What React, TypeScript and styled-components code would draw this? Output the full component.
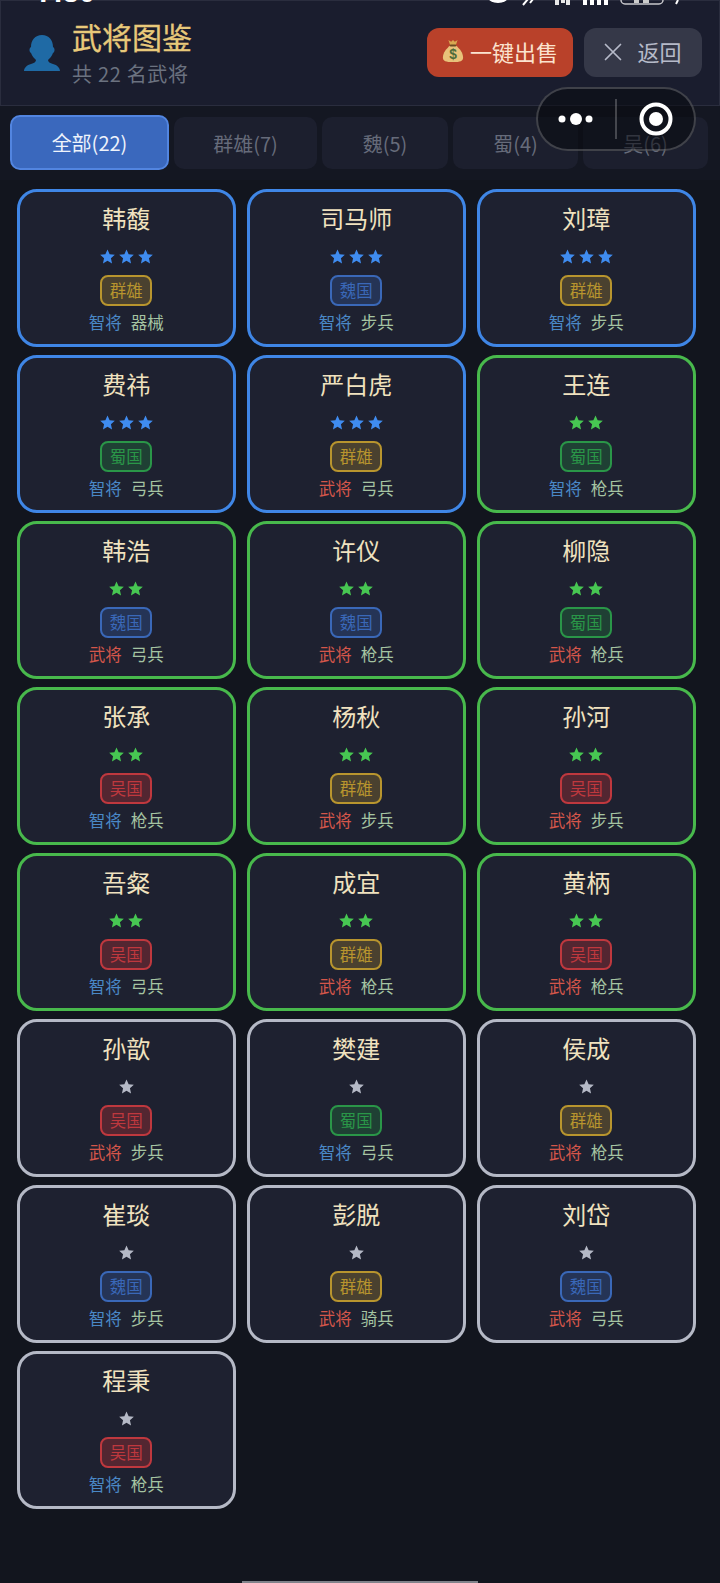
import React from "react";
import styled, { createGlobalStyle } from "styled-components";

const Global = createGlobalStyle`
  html, body { margin: 0; padding: 0; background: #12151e; }
  * { box-sizing: border-box; }
  body { font-family: "Noto Sans CJK SC", "Noto Sans", sans-serif; }
`;

const Page = styled.div`
  position: relative;
  width: 720px;
  height: 1583px;
  overflow: hidden;
  background: #12151e;
`;

const StatusClip = styled.div`
  position: absolute;
  top: 0;
  left: 0;
  right: 0;
  height: 6px;
  overflow: hidden;
  z-index: 3;
`;

const Time = styled.div`
  position: absolute;
  left: 37px;
  top: -23px;
  font: 700 29px/30px "Liberation Sans", sans-serif;
  color: #fff;
`;

const StatusIcons = styled.svg`
  position: absolute;
  left: 480px;
  top: 0;
`;

const Header = styled.header`
  height: 106px;
  display: flex;
  align-items: center;
  justify-content: space-between;
  padding: 0 17px 0 22px;
  background: #1a1d2e;
  border: 1px solid #2a2d3e;
`;

const TitleGroup = styled.div`
  display: flex;
  align-items: center;
  gap: 11px;
`;

const TitleText = styled.div`
  display: flex;
  flex-direction: column;
  gap: 5px;
  margin-top: 1px;
`;

const Title = styled.h1`
  margin: 0;
  font-size: 30px;
  line-height: 36px;
  font-weight: 400;
  color: #e8c97a;
  -webkit-text-stroke: 0.3px #e8c97a;
`;

const Subtitle = styled.div`
  font-size: 20px;
  line-height: 30px;
  letter-spacing: 0.7px;
  color: #6b7280;
`;

const Actions = styled.div`
  display: flex;
  gap: 11px;
  margin-bottom: 2px;
`;

const HeaderButton = styled.button<{ $sell?: boolean }>`
  height: 49px;
  width: ${(p) => (p.$sell ? 146 : 118)}px;
  padding: 0 0 2px;
  border: 0;
  border-radius: 12px;
  display: flex;
  align-items: center;
  justify-content: center;
  gap: ${(p) => (p.$sell ? 6 : 15)}px;
  font-family: inherit;
  font-size: 22px;
  background: ${(p) => (p.$sell ? "#b9412a" : "#353848")};
  color: ${(p) => (p.$sell ? "#fbe3cf" : "#b6bac9")};
`;

const TabBar = styled.nav`
  height: 74px;
  display: flex;
  align-items: flex-start;
  gap: 5px;
  padding: 9px 11px 0 10px;
  background: #141722;
`;

const Tab = styled.div<{ $active?: boolean; $w: number }>`
  width: ${(p) => p.$w}px;
  height: ${(p) => (p.$active ? 55 : 52)}px;
  margin-top: ${(p) => (p.$active ? 0 : 2)}px;
  border-radius: 10px;
  display: flex;
  align-items: center;
  justify-content: center;
  font-size: 20px;
  background: ${(p) => (p.$active ? "#3a68bd" : "#1c1f2e")};
  color: ${(p) => (p.$active ? "#eef3fb" : "#666b7a")};
  border: ${(p) => (p.$active ? "2px solid #5285e0" : "0")};
`;

const Grid = styled.main`
  display: grid;
  grid-template-columns: repeat(3, 218.5px);
  grid-auto-rows: 158px;
  column-gap: 11.5px;
  row-gap: 8px;
  padding: 9px 24px 0 17px;
`;

const rarity = {
  3: { border: "#3f86e6", star: "#3f8cf0" },
  2: { border: "#48b94c", star: "#47c752" },
  1: { border: "#b5b9c6", star: "#b5b9c6" },
} as const;

const Card = styled.article<{ $level: 1 | 2 | 3 }>`
  border: 3px solid ${(p) => rarity[p.$level].border};
  border-radius: 20px;
  background: #1e2130;
  display: flex;
  flex-direction: column;
  align-items: center;
  padding-top: 8px;
`;

const Name = styled.div`
  font-size: 24px;
  line-height: 36px;
  color: #f0e2bf;
`;

const Stars = styled.div<{ $level: 1 | 2 | 3 }>`
  display: flex;
  gap: 4px;
  height: 20px;
  margin-top: 12px;
  padding-top: 1px;
  color: ${(p) => rarity[p.$level].star};
`;

const factionColors: Record<string, { c: string; bg: string }> = {
  群雄: { c: "#b8952e", bg: "#4a412f" },
  魏国: { c: "#3a68b8", bg: "#253456" },
  蜀国: { c: "#2a9648", bg: "#1f4034" },
  吴国: { c: "#bf383e", bg: "#532631" },
};

const Faction = styled.div<{ $f: string }>`
  width: 52px;
  height: 31px;
  margin-top: 6.5px;
  border-radius: 8px;
  border: 2px solid ${(p) => factionColors[p.$f].c};
  background: ${(p) => factionColors[p.$f].bg};
  color: ${(p) => factionColors[p.$f].c};
  font-size: 16.5px;
  line-height: 26px;
  text-align: center;
  white-space: nowrap;
`;

const Meta = styled.div`
  display: flex;
  gap: 9px;
  margin-top: 2.5px;
  font-size: 16.5px;
  line-height: 28px;
`;

const Role = styled.span<{ $wu: boolean }>`
  color: ${(p) => (p.$wu ? "#d4564a" : "#4a88c6")};
`;

const Arm = styled.span`
  color: #a5c4a2;
`;

const Capsule = styled.div`
  position: absolute;
  left: 536px;
  top: 87px;
  width: 160px;
  height: 64px;
  border-radius: 32px;
  border: 2px solid rgba(255, 255, 255, 0.2);
  background: rgba(8, 9, 14, 0.55);
  z-index: 2;
`;

const CapsuleIcons = styled.svg`
  position: absolute;
  left: -2px;
  top: -2px;
`;

const HomeBar = styled.div`
  position: absolute;
  left: 242px;
  bottom: 0;
  width: 236px;
  height: 2px;
  background: #80828a;
`;

const CrossIcon = styled.svg`
  margin-top: 2px;
`;

const Bust = () => (
  <svg width="38" height="36" viewBox="0 0 36 36">
    <path
      d="M18 0C25 0 29 5 29 12C31 13 31 17 29 18C28 21 26 23 24 25C24 27 26 28 29 29C33 30 36 33 36 36H0C0 33 3 30 7 29C10 28 12 27 12 25C10 23 8 21 7 18C5 17 5 13 7 12C7 5 11 0 18 0Z"
      fill="#1f6aa5"
    />
  </svg>
);

const Bag = () => (
  <svg width="22" height="24" viewBox="0 0 24 26">
    <path d="M7 1l3 2 2-2 2 2 3-2-2 6H9z" fill="#d8a850" />
    <path d="M9 7h6c4 3 8 8 8 13 0 4-3 5-11 5S1 24 1 20C1 15 5 10 9 7z" fill="#e8c27a" />
    <rect x="8.500" y="6" width="7" height="2" rx="1" fill="#6a4a22" />
    <text x="12" y="22" textAnchor="middle" fontSize="15" fontWeight="700" fill="#4d6b3a" fontFamily="Liberation Sans">$</text>
  </svg>
);

const Cross = () => (
  <CrossIcon width="18" height="18" viewBox="0 0 18 18">
    <path d="M1.500 1.500l15 15M16.500 1.500l-15 15" stroke="#b6bac9" strokeWidth="1.700" strokeLinecap="round" />
  </CrossIcon>
);

const Star = () => (
  <svg width="15" height="15" viewBox="0 0 24 24" fill="currentColor">
    <path d="M12 .8l3.400 7.600 8.300.9-6.200 5.600 1.800 8.200L12 18.900 4.700 23.100l1.800-8.200L.3 9.300l8.300-.9z" />
  </svg>
);

type Row = [string, 1 | 2 | 3, string, string, string];
const heroes: Row[] = [
  ["韩馥", 3, "群雄", "智将", "器械"],
  ["司马师", 3, "魏国", "智将", "步兵"],
  ["刘璋", 3, "群雄", "智将", "步兵"],
  ["费祎", 3, "蜀国", "智将", "弓兵"],
  ["严白虎", 3, "群雄", "武将", "弓兵"],
  ["王连", 2, "蜀国", "智将", "枪兵"],
  ["韩浩", 2, "魏国", "武将", "弓兵"],
  ["许仪", 2, "魏国", "武将", "枪兵"],
  ["柳隐", 2, "蜀国", "武将", "枪兵"],
  ["张承", 2, "吴国", "智将", "枪兵"],
  ["杨秋", 2, "群雄", "武将", "步兵"],
  ["孙河", 2, "吴国", "武将", "步兵"],
  ["吾粲", 2, "吴国", "智将", "弓兵"],
  ["成宜", 2, "群雄", "武将", "枪兵"],
  ["黄柄", 2, "吴国", "武将", "枪兵"],
  ["孙歆", 1, "吴国", "武将", "步兵"],
  ["樊建", 1, "蜀国", "智将", "弓兵"],
  ["侯成", 1, "群雄", "武将", "枪兵"],
  ["崔琰", 1, "魏国", "智将", "步兵"],
  ["彭脱", 1, "群雄", "武将", "骑兵"],
  ["刘岱", 1, "魏国", "武将", "弓兵"],
  ["程秉", 1, "吴国", "智将", "枪兵"],
];

const tabs: [string, number][] = [
  ["全部(22)", 159],
  ["群雄(7)", 143],
  ["魏(5)", 126],
  ["蜀(4)", 125],
  ["吴(6)", 125],
];

export default function App() {
  return (
    <Page>
      <Global />
      <StatusClip>
        <Time>7:30</Time>
        <StatusIcons width="220" height="6" viewBox="0 0 220 6">
          <ellipse cx="18" cy="-3" rx="10" ry="6" fill="#fff" />
          <path d="M43 5l5-6M50 3l3-4" stroke="#fff" strokeWidth="2" />
          <path d="M75 0h4v5h-4zM81 0h4v3h-4zM86 0h4v5h-4z" fill="#e8e8e8" />
          <path d="M103 0h4v5h-4zM110 0h4v5h-4zM117 0h4v5h-4zM124 0h4v5h-4z" fill="#fff" />
          <rect x="141" y="-9" width="42" height="13" rx="4" fill="none" stroke="#c8c8cc" strokeWidth="1.500" />
          <path d="M154 0h5v3h-5zM163 0h6v3h-6z" fill="#ccc" />
          <path d="M196 4l2-4" stroke="#fff" strokeWidth="2" />
        </StatusIcons>
      </StatusClip>
      <Header>
        <TitleGroup>
          <Bust />
          <TitleText>
            <Title>武将图鉴</Title>
            <Subtitle>共 22 名武将</Subtitle>
          </TitleText>
        </TitleGroup>
        <Actions>
          <HeaderButton $sell>
            <Bag />
            一键出售
          </HeaderButton>
          <HeaderButton>
            <Cross />
            返回
          </HeaderButton>
        </Actions>
      </Header>
      <TabBar>
        {tabs.map(([t, w], i) => (
          <Tab key={t} $active={i === 0} $w={w}>
            {t}
          </Tab>
        ))}
      </TabBar>
      <Grid>
        {heroes.map(([name, level, faction, role, arm]) => (
          <Card key={name} $level={level}>
            <Name>{name}</Name>
            <Stars $level={level}>
              {Array.from({ length: level }).map((_, i) => (
                <Star key={i} />
              ))}
            </Stars>
            <Faction $f={faction}>{faction}</Faction>
            <Meta>
              <Role $wu={role === "武将"}>{role}</Role>
              <Arm>{arm}</Arm>
            </Meta>
          </Card>
        ))}
      </Grid>
      <Capsule>
        <CapsuleIcons width="160" height="64" viewBox="0 0 160 64">
          <circle cx="26" cy="32" r="3.500" fill="#fff" />
          <circle cx="40" cy="32" r="6" fill="#fff" />
          <circle cx="53" cy="32" r="3.500" fill="#fff" />
          <path d="M80 12v40" stroke="rgba(255,255,255,.3)" strokeWidth="1.500" />
          <circle cx="120" cy="32" r="14.500" fill="none" stroke="#fff" strokeWidth="4" />
          <circle cx="120" cy="32" r="7" fill="#fff" />
        </CapsuleIcons>
      </Capsule>
      <HomeBar />
    </Page>
  );
}
